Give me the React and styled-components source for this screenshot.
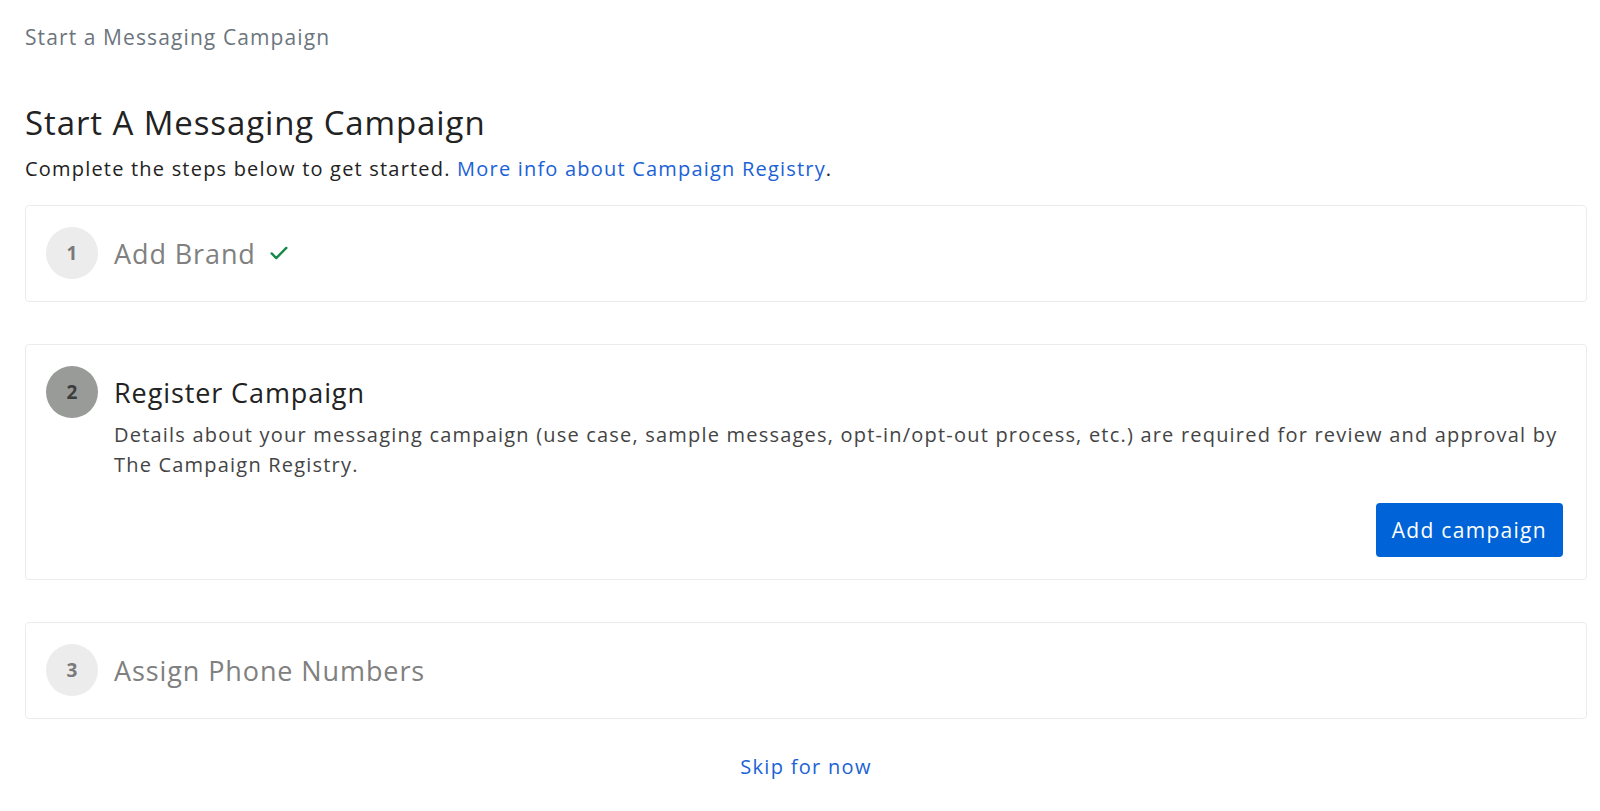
import React from "react";
import styled, { createGlobalStyle } from "styled-components";

const GlobalStyle = createGlobalStyle`
  body {
    margin: 0;
    background: #fff;
    font-family: "Open Sans", "Liberation Sans", sans-serif;
  }
`;

const Page = styled.div`
  padding: 22px 13px 30px 25px;
  display: flex;
  flex-direction: column;
`;

const Breadcrumb = styled.div`
  font-size: 21px;
  line-height: 30px;
  letter-spacing: 1.1px;
  color: #6c757d;
`;

const Title = styled.h1`
  margin: 51px 0 0;
  font-size: 33px;
  font-weight: 400;
  line-height: 40px;
  letter-spacing: 0.9px;
  color: #222;
`;

const Intro = styled.p`
  margin: 11px 0 0;
  font-size: 20px;
  line-height: 30px;
  letter-spacing: 1.2px;
  color: #222;
`;

const Link = styled.a`
  color: #1a62d6;
  text-decoration: none;
  cursor: pointer;
`;

const Steps = styled.div`
  margin-top: 21px;
  display: flex;
  flex-direction: column;
  gap: 42px;
`;

const Card = styled.div`
  border: 1px solid #ececec;
  border-radius: 4px;
  padding: 21px 23px 22px 20px;
  display: flex;
  gap: 16px;
  align-items: flex-start;
`;

const Circle = styled.div`
  flex: 0 0 52px;
  width: 52px;
  height: 52px;
  border-radius: 50%;
  display: flex;
  align-items: center;
  justify-content: center;
  font-size: 19px;
  font-weight: 700;
  background: ${(p) => (p.$active ? "#999b98" : "#ececec")};
  color: ${(p) => (p.$active ? "#3d3d3d" : "#7a7a7a")};
`;

const Body = styled.div`
  flex: 1;
  display: flex;
  flex-direction: column;
`;

const StepTitle = styled.div`
  height: 52px;
  display: flex;
  align-items: center;
  gap: 12px;
  font-size: 27px;
  letter-spacing: 0.9px;
  color: ${(p) => (p.$active ? "#222" : "#808080")};
`;

const Desc = styled.p`
  margin: 2px 0 0;
  font-size: 20px;
  line-height: 30px;
  letter-spacing: 1.2px;
  color: #444;
`;

const Actions = styled.div`
  display: flex;
  justify-content: flex-end;
  margin-top: 23px;
`;

const Button = styled.button`
  height: 54px;
  padding: 0 16px;
  border: none;
  border-radius: 4px;
  background: #0064d8;
  color: #fff;
  font-family: inherit;
  font-size: 21px;
  letter-spacing: 1.3px;
  cursor: pointer;
`;

const Skip = styled.a`
  align-self: center;
  margin-top: 33px;
  font-size: 20px;
  line-height: 30px;
  letter-spacing: 1.3px;
  color: #1a62d6;
  cursor: pointer;
`;

const Check = () => (
  <svg width="22" height="22" viewBox="0 0 24 24" fill="none" stroke="#138a4a" strokeWidth="2.6" strokeLinecap="round" strokeLinejoin="round">
    <path d="M4 12.5l5 5L20 6.5" />
  </svg>
);

export default function App() {
  return (
    <>
      <GlobalStyle />
      <Page>
        <Breadcrumb>Start a Messaging Campaign</Breadcrumb>
        <Title>Start A Messaging Campaign</Title>
        <Intro>
          Complete the steps below to get started.{" "}
          <Link>More info about Campaign Registry</Link>.
        </Intro>
        <Steps>
          <Card>
            <Circle>1</Circle>
            <Body>
              <StepTitle>
                Add Brand <Check />
              </StepTitle>
            </Body>
          </Card>
          <Card>
            <Circle $active>2</Circle>
            <Body>
              <StepTitle $active>Register Campaign</StepTitle>
              <Desc>
                Details about your messaging campaign (use case, sample messages, opt-in/opt-out process, etc.) are required for review and approval by The Campaign Registry.
              </Desc>
              <Actions>
                <Button>Add campaign</Button>
              </Actions>
            </Body>
          </Card>
          <Card>
            <Circle>3</Circle>
            <Body>
              <StepTitle>Assign Phone Numbers</StepTitle>
            </Body>
          </Card>
        </Steps>
        <Skip>Skip for now</Skip>
      </Page>
    </>
  );
}
